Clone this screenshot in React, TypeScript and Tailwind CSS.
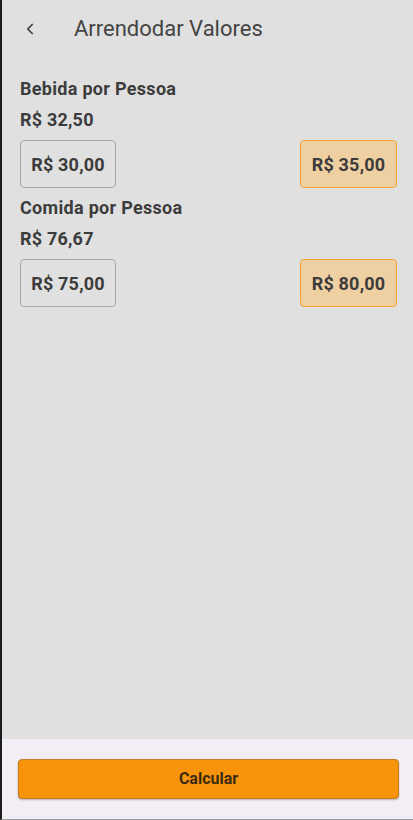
import { ChevronLeft } from 'lucide-react'

interface Rounding {
  label: string
  value: string
  down: string
  up: string
}

const items: Rounding[] = [
  { label: 'Bebida por Pessoa', value: 'R$ 32,50', down: 'R$ 30,00', up: 'R$ 35,00' },
  { label: 'Comida por Pessoa', value: 'R$ 76,67', down: 'R$ 75,00', up: 'R$ 80,00' },
]

const App = () => {
  return (
    <div
      className="h-[820px] w-[413px] flex flex-col bg-[#e0e0e0] border-l-2 border-l-[#1c1c1c] border-b border-b-[#9a9a9a] text-[#3c3c3c]"
      style={{ fontFamily: 'Roboto, "Noto Sans", sans-serif' }}
    >
      <header className="h-[58px] flex items-center shrink-0">
        <button type="button" className="w-[56px] h-[56px] flex items-center justify-center">
          <ChevronLeft size={18} strokeWidth={2.2} className="text-[#3a3a3a]" />
        </button>
        <h1 className="ml-[16px] text-[22px] leading-[28px] text-[#444]">Arrendodar Valores</h1>
      </header>

      <main className="flex-1 pl-[18px] pr-[16px] pt-[19px]">
        {items.map((item) => (
          <section key={item.label} className="mb-[8px]">
            <p className="text-[18px] font-bold leading-[24px] tracking-[0.3px] text-[#3c3c3c]">{item.label}</p>
            <p className="mt-[7px] text-[18px] font-bold leading-[24px] tracking-[0.2px] text-[#3c3c3c]">{item.value}</p>
            <div className="mt-[8px] flex justify-between">
              <button
                type="button"
                className="w-[96px] h-[48px] rounded-[4px] border border-[#a8a8a8] text-[18px] font-bold tracking-[0.2px] text-[#3c3c3c]"
              >
                {item.down}
              </button>
              <button
                type="button"
                className="w-[97px] h-[48px] rounded-[4px] border border-[#f5a234] bg-[#efd0a2] text-[18px] font-bold tracking-[0.2px] text-[#3c3c3c]"
              >
                {item.up}
              </button>
            </div>
          </section>
        ))}
      </main>

      <footer className="h-[80px] shrink-0 bg-[#f3eef5] pl-[16px] pr-[14px] pt-[20px]">
        <button
          type="button"
          className="w-full h-[40px] rounded-[4px] bg-[#f7940b] border border-[#c77a20] shadow-[0_1px_2px_rgba(0,0,0,0.25)] text-[16px] font-bold text-[#3a2a12]"
        >
          Calcular
        </button>
      </footer>
    </div>
  )
}

export default App
